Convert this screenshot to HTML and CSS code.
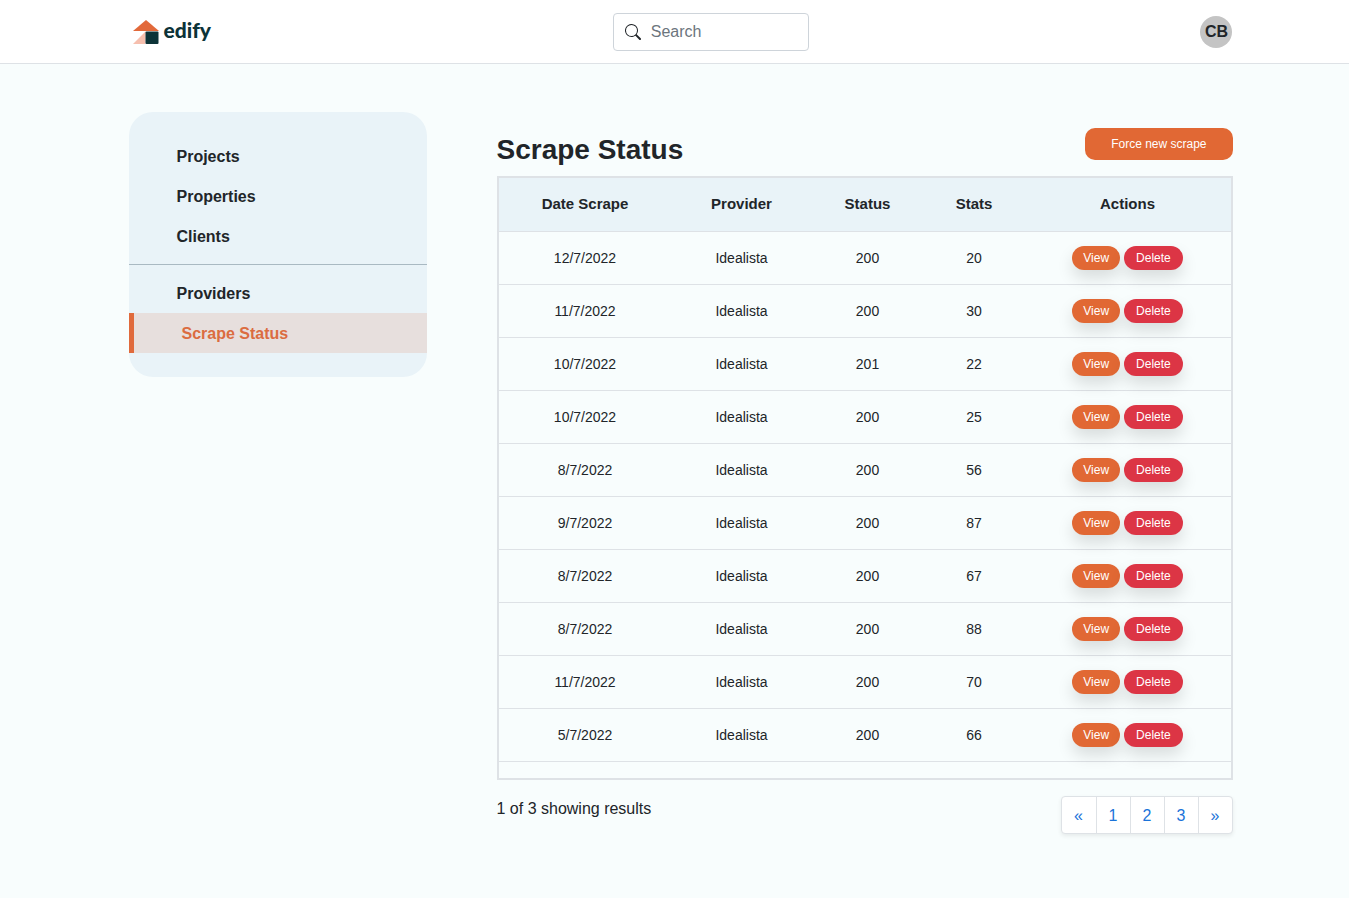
FILE: index.html
```
<!DOCTYPE html>
<html lang="en">
<head>
<meta charset="utf-8">
<meta name="viewport" content="width=device-width, initial-scale=1">
<title>Edify - Scrape Status</title>
<link rel="stylesheet" href="styles.css">
</head>
<body>
<header class="topbar">
  <div class="topbar-inner">
    <a class="logo" href="#" aria-label="edify home">
      <svg class="logo-mark" viewBox="0 0 26 24" aria-hidden="true">
        <path d="M0 11 13 0 26 11Z" fill="#e2693a"/>
        <path d="M0 24 12.500 11.500V24Z" fill="#f6bfae"/>
        <rect x="12.500" y="11.500" width="13" height="12.500" rx="1" fill="#0c3338"/>
      </svg>
      <span class="logo-name">edify</span>
    </a>
    <form class="search" role="search">
      <svg class="search-icon" viewBox="0 0 16 16" aria-hidden="true">
        <path fill="currentColor" d="M11.742 10.344a6.500 6.500 0 1 0-1.397 1.398h-.001c.03.040.062.078.098.115l3.850 3.850a1 1 0 0 0 1.415-1.414l-3.850-3.850a1.007 1.007 0 0 0-.115-.1zM12 6.500a5.500 5.500 0 1 1-11 0 5.500 5.500 0 0 1 11 0z"/>
      </svg>
      <input class="search-input" type="search" placeholder="Search" aria-label="Search">
    </form>
    <button class="avatar" type="button" aria-label="Account CB">CB</button>
  </div>
</header>
<div class="page">
  <nav class="sidebar" aria-label="Main">
    <a class="nav-link" href="#">Projects</a>
    <a class="nav-link" href="#">Properties</a>
    <a class="nav-link" href="#">Clients</a>
    <hr class="nav-divider">
    <a class="nav-link" href="#">Providers</a>
    <a class="nav-link active" href="#" aria-current="page">Scrape Status</a>
  </nav>
  <main class="content">
    <div class="content-head">
      <h1 class="title">Scrape Status</h1>
      <button class="btn-force" type="button">Force new scrape</button>
    </div>
    <div class="table-box">
      <table class="table">
        <colgroup><col class="col-date"><col class="col-provider"><col class="col-status"><col class="col-stats"><col class="col-actions"></colgroup>
        <thead>
          <tr><th scope="col">Date Scrape</th><th scope="col">Provider</th><th scope="col">Status</th><th scope="col">Stats</th><th scope="col">Actions</th></tr>
        </thead>
        <tbody>
          <tr><td>12/7/2022</td><td>Idealista</td><td>200</td><td>20</td><td><div class="actions"><button class="pill view" type="button">View</button><button class="pill delete" type="button">Delete</button></div></td></tr>
          <tr><td>11/7/2022</td><td>Idealista</td><td>200</td><td>30</td><td><div class="actions"><button class="pill view" type="button">View</button><button class="pill delete" type="button">Delete</button></div></td></tr>
          <tr><td>10/7/2022</td><td>Idealista</td><td>201</td><td>22</td><td><div class="actions"><button class="pill view" type="button">View</button><button class="pill delete" type="button">Delete</button></div></td></tr>
          <tr><td>10/7/2022</td><td>Idealista</td><td>200</td><td>25</td><td><div class="actions"><button class="pill view" type="button">View</button><button class="pill delete" type="button">Delete</button></div></td></tr>
          <tr><td>8/7/2022</td><td>Idealista</td><td>200</td><td>56</td><td><div class="actions"><button class="pill view" type="button">View</button><button class="pill delete" type="button">Delete</button></div></td></tr>
          <tr><td>9/7/2022</td><td>Idealista</td><td>200</td><td>87</td><td><div class="actions"><button class="pill view" type="button">View</button><button class="pill delete" type="button">Delete</button></div></td></tr>
          <tr><td>8/7/2022</td><td>Idealista</td><td>200</td><td>67</td><td><div class="actions"><button class="pill view" type="button">View</button><button class="pill delete" type="button">Delete</button></div></td></tr>
          <tr><td>8/7/2022</td><td>Idealista</td><td>200</td><td>88</td><td><div class="actions"><button class="pill view" type="button">View</button><button class="pill delete" type="button">Delete</button></div></td></tr>
          <tr><td>11/7/2022</td><td>Idealista</td><td>200</td><td>70</td><td><div class="actions"><button class="pill view" type="button">View</button><button class="pill delete" type="button">Delete</button></div></td></tr>
          <tr><td>5/7/2022</td><td>Idealista</td><td>200</td><td>66</td><td><div class="actions"><button class="pill view" type="button">View</button><button class="pill delete" type="button">Delete</button></div></td></tr>
        </tbody>
      </table>
    </div>
    <div class="content-foot">
      <p class="summary">1 of 3 showing results</p>
      <nav class="pagination" aria-label="Pages">
        <a class="page-link" href="#" aria-label="Previous">«</a>
        <a class="page-link" href="#">1</a>
        <a class="page-link" href="#">2</a>
        <a class="page-link" href="#">3</a>
        <a class="page-link" href="#" aria-label="Next">»</a>
      </nav>
    </div>
  </main>
</div>
</body>
</html>
```
FILE: styles.css
```
* { box-sizing: border-box; }

body {
  margin: 0;
  min-height: 100vh;
  background: #f8fdfd;
  color: #212529;
  font: 16px/24px "Liberation Sans", Arial, sans-serif;
}

button, input { font: inherit; }
button { cursor: pointer; }

.topbar {
  background: #fff;
  border-bottom: 1px solid #dee2e6;
}

.topbar-inner,
.page {
  max-width: 1140px;
  margin: 0 auto;
}

.topbar-inner {
  display: flex;
  justify-content: space-between;
  align-items: center;
  padding: 13px 12px 12px 28px;
}

.logo {
  display: flex;
  align-items: flex-start;
  gap: 5px;
  padding-right: 10px;
  color: #0c3338;
  text-decoration: none;
}

.logo-mark { width: 26px; height: 24px; }

.logo-name {
  font: 900 21px/20px Lato, sans-serif;
}

.search {
  display: flex;
  align-items: center;
  gap: 10px;
  width: 196px;
  height: 38px;
  padding: 0 11px;
  border: 1px solid #ced4da;
  border-radius: 4px;
  background: #fff;
}

.search-icon { flex: none; width: 16px; height: 16px; }

.search-input {
  flex: 1;
  min-width: 0;
  padding: 0;
  border: 0;
  outline: 0;
  background: none;
  color: inherit;
}

.search-input::placeholder { color: #6c757d; opacity: 1; }

.avatar {
  width: 32px;
  height: 32px;
  padding: 0;
  border: 0;
  border-radius: 50%;
  background: #c4c4c4;
  color: #212529;
  font-weight: 700;
}

.page {
  display: grid;
  grid-template-columns: 298px minmax(0, 1fr);
  gap: 70px;
  align-items: start;
  padding: 48px 12px 64px 24px;
}

.sidebar {
  padding: 24px 0;
  border-radius: 24px;
  background: #e9f3f8;
}

.nav-link {
  display: block;
  padding: 9px 48px 7px;
  color: #212529;
  font-weight: 700;
  text-decoration: none;
}

.nav-link.active {
  border-left: 5px solid #e06a3c;
  background: #e7dfdd;
  color: #db6c40;
}

.nav-divider {
  margin: 8px 0;
  border: 0;
  border-top: 1px solid #a9b9c2;
}

.content { padding-top: 16px; }

.content-head {
  display: flex;
  justify-content: space-between;
  align-items: flex-start;
  height: 48px;
}

.title {
  margin: 5px 0 0;
  font-size: 28px;
  line-height: 34px;
}

.btn-force {
  height: 32px;
  padding: 0 26px;
  border: 0;
  border-radius: 10px;
  background: #e16834;
  color: #fff;
  font-size: 12px;
}

.table-box {
  padding-bottom: 16px;
  border: 2px solid #dee2e6;
}

.table {
  width: 100%;
  table-layout: fixed;
  border-collapse: collapse;
  font-size: 14px;
  text-align: center;
}

.col-date { width: 173px; }
.col-provider { width: 140px; }
.col-status { width: 112px; }
.col-stats { width: 101px; }
.col-actions { width: 206px; }

.table th,
.table td {
  height: 53px;
  padding: 0;
  border-bottom: 1px solid #dee2e6;
}

.table th { background: #e9f3f8; font-size: 15px; }

.actions {
  display: flex;
  justify-content: center;
  gap: 4px;
}

.pill {
  height: 24px;
  padding: 0 11px;
  border: 0;
  border-radius: 12px;
  box-shadow: 0 8px 16px rgba(0, 0, 0, 0.13);
  color: #fff;
  font-size: 12px;
}

.view { background: #e16834; }
.delete { padding: 0 12px; background: #dc3545; }

.content-foot {
  display: flex;
  justify-content: space-between;
  align-items: flex-start;
  margin-top: 16px;
}

.summary { margin: 0; padding-top: 1px; }

.pagination {
  display: flex;
  overflow: hidden;
  border: 1px solid #dee2e6;
  border-radius: 4px;
  background: #fff;
  box-shadow: 0 2px 4px rgba(0, 0, 0, 0.075);
}

.page-link {
  min-width: 34px;
  padding: 7px 0 5px;
  color: #1a73d9;
  text-align: center;
  text-decoration: none;
}

.page-link + .page-link { border-left: 1px solid #dee2e6; }
```
